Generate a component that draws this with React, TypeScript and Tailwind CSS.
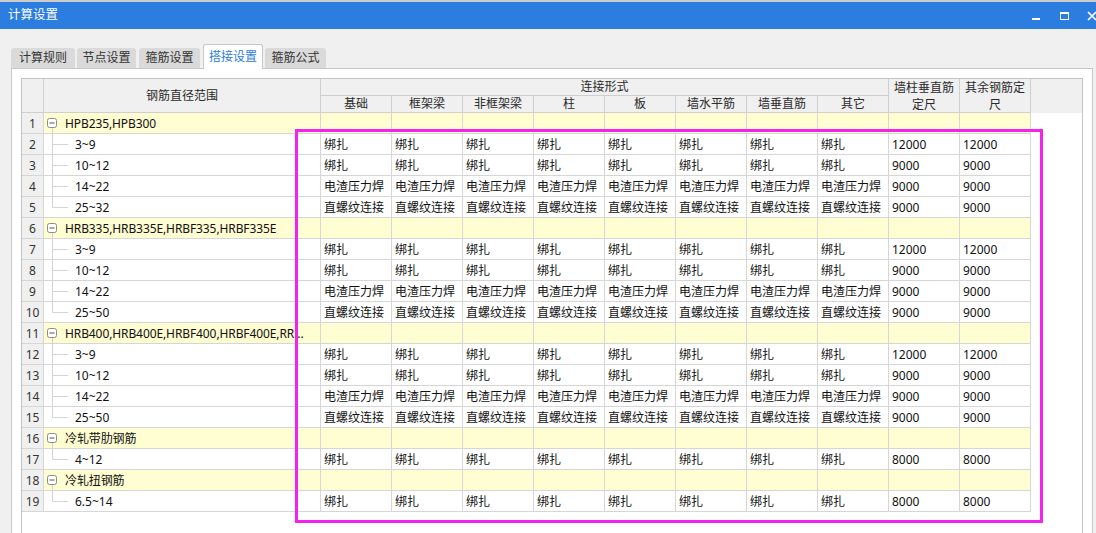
import React from "react";

type Row =
  | { kind: "group"; name: string }
  | { kind: "item"; name: string; values: string[]; last?: boolean };

const BANG = "绑扎";
const DIAN = "电渣压力焊";
const ZHI = "直螺纹连接";

const linkCols = ["基础", "框架梁", "非框架梁", "柱", "板", "墙水平筋", "墙垂直筋", "其它"];

function item(name: string, kind: string, a: string, b: string, last = false): Row {
  return { kind: "item", name, values: [...Array(8).fill(kind), a, b], last };
}

const rows: Row[] = [
  { kind: "group", name: "HPB235,HPB300" },
  item("3~9", BANG, "12000", "12000"),
  item("10~12", BANG, "9000", "9000"),
  item("14~22", DIAN, "9000", "9000"),
  item("25~32", ZHI, "9000", "9000", true),
  { kind: "group", name: "HRB335,HRB335E,HRBF335,HRBF335E" },
  item("3~9", BANG, "12000", "12000"),
  item("10~12", BANG, "9000", "9000"),
  item("14~22", DIAN, "9000", "9000"),
  item("25~50", ZHI, "9000", "9000", true),
  { kind: "group", name: "HRB400,HRB400E,HRBF400,HRBF400E,RR..." },
  item("3~9", BANG, "12000", "12000"),
  item("10~12", BANG, "9000", "9000"),
  item("14~22", DIAN, "9000", "9000"),
  item("25~50", ZHI, "9000", "9000", true),
  { kind: "group", name: "冷轧带肋钢筋" },
  item("4~12", BANG, "8000", "8000", true),
  { kind: "group", name: "冷轧扭钢筋" },
  item("6.5~14", BANG, "8000", "8000", true),
];

const tabs = [
  { label: "计算规则", w: "w-[64px]", mr: "mr-[2px]" },
  { label: "节点设置", w: "w-[59px]", mr: "mr-[3px]" },
  { label: "箍筋设置", w: "w-[61px]", mr: "mr-[3px]" },
  { label: "搭接设置", w: "w-[60px]", mr: "mr-[2px]", active: true },
  { label: "箍筋公式", w: "w-[61px]", mr: "" },
];

function GroupToggle() {
  return (
    <svg width="21" height="20" className="shrink-0">
      <line x1="8.5" y1="15" x2="8.5" y2="21" stroke="#d4d4d4" />
      <rect x="3.5" y="5.5" width="9" height="9" rx="2" fill="#fff" stroke="#8c8c8c" />
      <line x1="5.5" y1="10" x2="10.5" y2="10" stroke="#555" />
    </svg>
  );
}

function TreeLine({ last }: { last?: boolean }) {
  return (
    <svg width="31" height="20" className="shrink-0">
      <line x1="8.5" y1="-1" x2="8.5" y2={last ? 10.5 : 21} stroke="#d4d4d4" />
      <line x1="8.5" y1="10.5" x2="24" y2="10.5" stroke="#d4d4d4" />
    </svg>
  );
}

export default function App() {
  return (
    <div
      className="relative h-[533px] w-[1096px] overflow-hidden bg-[#f0f0f0] text-[12px] text-[#111]"
      style={{ fontFamily: '"Noto Sans", "Noto Sans CJK SC", sans-serif' }}
    >
      <div className="h-[2px] bg-[#cccccc]" />
      <div className="flex h-[27px] items-center bg-[#2b7de0] pl-[8px] text-[12.5px] text-white">
        <span>计算设置</span>
        <div className="ml-auto flex items-center">
          <svg width="10" height="10" className="mr-[18px] mt-[2px]">
            <rect x="1" y="6" width="8" height="2" fill="#fff" />
          </svg>
          <svg width="10" height="10" className="mr-[18px]">
            <rect x="1.5" y="1.5" width="8" height="7" fill="none" stroke="#fff" />
            <rect x="1" y="1" width="9" height="2" fill="#fff" />
          </svg>
          <svg width="10" height="10" className="mr-[-1px]">
            <path d="M1 1 L9 9 M9 1 L1 9" stroke="#fff" strokeWidth="1.6" />
          </svg>
        </div>
      </div>

      <div className="mt-[15px] flex h-[24px] items-end pl-[11px]">
        {tabs.map((t) =>
          t.active ? (
            <div
              key={t.label}
              className={`relative z-10 flex h-[25px] ${t.w} ${t.mr} -mb-[1px] items-center justify-center rounded-t-[3px] border border-b-0 border-[#c8c8c8] bg-white text-[#2b7de0]`}
            >
              {t.label}
            </div>
          ) : (
            <div
              key={t.label}
              className={`flex h-[20px] ${t.w} ${t.mr} items-center justify-center rounded-t-[3px] bg-[#dadada] text-[#333]`}
            >
              {t.label}
            </div>
          ),
        )}
      </div>

      <div className="ml-[11px] h-[480px] w-[1082px] border border-[#c8c8c8] bg-white pl-[9px] pt-[9px]">
        <div className="h-[470px] w-[1062px] border border-[#c4c4c4] bg-white">
          <div className="grid grid-cols-[22px_277px_repeat(10,71px)] grid-rows-[17px_17px] bg-[#f0f0f0] text-[#2a2a2a]">
            <div className="row-span-2 border-b border-r border-[#cfcfcf]" />
            <div className="row-span-2 flex items-center justify-center border-b border-r border-[#cfcfcf] pt-[1px]">
              钢筋直径范围
            </div>
            <div className="col-span-8 flex items-center justify-center border-b border-r border-[#cfcfcf] leading-[16px]">
              连接形式
            </div>
            <div className="row-span-2 flex items-center justify-center border-b border-r border-[#cfcfcf] px-[2px] text-center leading-[17px]">
              墙柱垂直筋定尺
            </div>
            <div className="row-span-2 flex items-center justify-center border-b border-r border-[#cfcfcf] px-[2px] text-center leading-[17px]">
              其余钢筋定尺
            </div>
            {linkCols.map((c) => (
              <div
                key={c}
                className="flex items-center justify-center border-b border-r border-[#cfcfcf] leading-[16px]"
              >
                {c}
              </div>
            ))}
          </div>

          {rows.map((r, i) => (
            <div key={i} className="flex h-[21px]">
              <div className="flex w-[22px] shrink-0 items-center justify-center border-b border-r border-[#d6d6d6] bg-[#f0f0f0] pt-[1px] text-[#333]">
                {i + 1}
              </div>
              {r.kind === "group" ? (
                <>
                  <div className="flex w-[277px] shrink-0 items-center overflow-hidden whitespace-nowrap border-b border-r border-[#d6d6d6] bg-[#fffdd2]">
                    <GroupToggle />
                    <span className="pt-[1px] tracking-[-0.1px]">{r.name}</span>
                  </div>
                  {Array.from({ length: 10 }).map((_, k) => (
                    <div
                      key={k}
                      className="w-[71px] shrink-0 border-b border-r border-[#d6d6d6] bg-[#fffdd2]"
                    />
                  ))}
                </>
              ) : (
                <>
                  <div className="flex w-[277px] shrink-0 items-center whitespace-nowrap border-b border-r border-[#d6d6d6]">
                    <TreeLine last={r.last} />
                    <span className="pt-[1px]">{r.name}</span>
                  </div>
                  {r.values.map((v, k) => (
                    <div
                      key={k}
                      className="flex w-[71px] shrink-0 items-center overflow-hidden whitespace-nowrap border-b border-r border-[#d6d6d6] pl-[3px] pt-[1px]"
                    >
                      {v}
                    </div>
                  ))}
                </>
              )}
            </div>
          ))}
        </div>
      </div>

      <div className="absolute left-[295px] top-[129px] h-[394px] w-[748px] border-[3px] border-[#f522ee]" />
    </div>
  );
}
